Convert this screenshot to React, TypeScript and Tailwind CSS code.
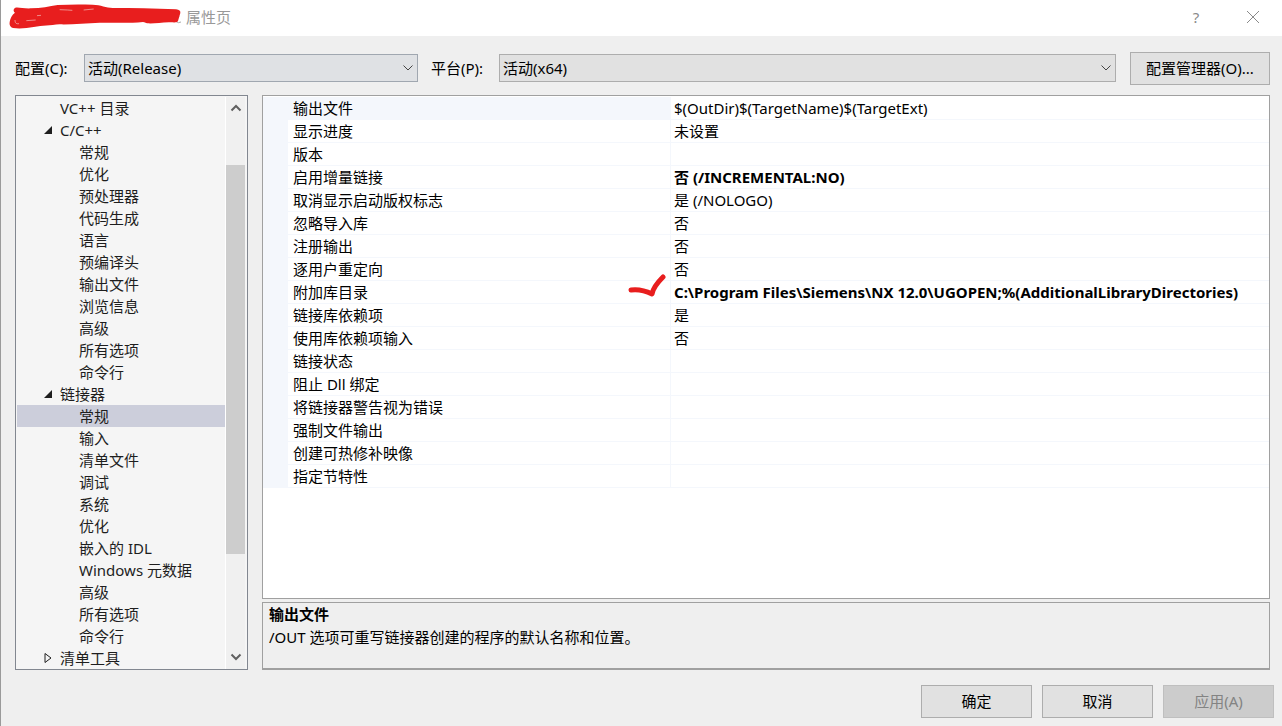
import { useState } from "react"

type TreeItem = {
  id: string
  label: string
  level: 1 | 2
  state?: "open" | "closed"
}

type Property = {
  name: string
  value: string
  bold?: boolean
  marked?: boolean
}

const tree: TreeItem[] = [
  { id: "vc", label: "VC++ 目录", level: 1 },
  { id: "c", label: "C/C++", level: 1, state: "open" },
  { id: "c-general", label: "常规", level: 2 },
  { id: "c-optimize", label: "优化", level: 2 },
  { id: "c-preprocessor", label: "预处理器", level: 2 },
  { id: "c-codegen", label: "代码生成", level: 2 },
  { id: "c-language", label: "语言", level: 2 },
  { id: "c-pch", label: "预编译头", level: 2 },
  { id: "c-output", label: "输出文件", level: 2 },
  { id: "c-browse", label: "浏览信息", level: 2 },
  { id: "c-advanced", label: "高级", level: 2 },
  { id: "c-all", label: "所有选项", level: 2 },
  { id: "c-cmd", label: "命令行", level: 2 },
  { id: "link", label: "链接器", level: 1, state: "open" },
  { id: "link-general", label: "常规", level: 2 },
  { id: "link-input", label: "输入", level: 2 },
  { id: "link-manifest", label: "清单文件", level: 2 },
  { id: "link-debug", label: "调试", level: 2 },
  { id: "link-system", label: "系统", level: 2 },
  { id: "link-optimize", label: "优化", level: 2 },
  { id: "link-idl", label: "嵌入的 IDL", level: 2 },
  { id: "link-winmd", label: "Windows 元数据", level: 2 },
  { id: "link-advanced", label: "高级", level: 2 },
  { id: "link-all", label: "所有选项", level: 2 },
  { id: "link-cmd", label: "命令行", level: 2 },
  { id: "manifest", label: "清单工具", level: 1, state: "closed" },
]

const properties: Property[] = [
  { name: "输出文件", value: "$(OutDir)$(TargetName)$(TargetExt)" },
  { name: "显示进度", value: "未设置" },
  { name: "版本", value: "" },
  { name: "启用增量链接", value: "否 (/INCREMENTAL:NO)", bold: true },
  { name: "取消显示启动版权标志", value: "是 (/NOLOGO)" },
  { name: "忽略导入库", value: "否" },
  { name: "注册输出", value: "否" },
  { name: "逐用户重定向", value: "否" },
  {
    name: "附加库目录",
    value: "C:\\Program Files\\Siemens\\NX 12.0\\UGOPEN;%(AdditionalLibraryDirectories)",
    bold: true,
    marked: true,
  },
  { name: "链接库依赖项", value: "是" },
  { name: "使用库依赖项输入", value: "否" },
  { name: "链接状态", value: "" },
  { name: "阻止 Dll 绑定", value: "" },
  { name: "将链接器警告视为错误", value: "" },
  { name: "强制文件输出", value: "" },
  { name: "创建可热修补映像", value: "" },
  { name: "指定节特性", value: "" },
]

function Chevron({ className }: { className: string }) {
  return (
    <svg viewBox="0 0 12 8" className={className} fill="none" stroke="currentColor" aria-hidden="true">
      <path d="M1.5 1.5 6 6l4.5-4.5" />
    </svg>
  )
}

function TreeArrow({ state }: { state?: "open" | "closed" }) {
  return (
    <svg viewBox="0 0 10 12" className="h-3 w-2.5 shrink-0" aria-hidden="true">
      {state === "open" && <path d="M9 2v8H1z" fill="#1e1e1e" />}
      {state === "closed" && <path d="M2 1.5v9L8 6z" fill="none" stroke="#1e1e1e" />}
    </svg>
  )
}

function Scribble() {
  return (
    <svg viewBox="0 0 552 108" className="h-9 w-[184px] shrink-0" aria-hidden="true">
      <path d="M536 38c-6 3-6 8-2 11M526 65l6 3 8-2" fill="none" stroke="#a8a8a8" strokeWidth="3" />
      <path
        d="M43 23c10-2 25 3 47 2 30 0 55-6 80-10 35-2 70-2 105-1 25 1 40 9 60 10 60 0 125 1 190 4 10 1 14 5 13 11l-7 24c-5 7-16 3-27 4-25 1-45 4-65 3-6-1-8-4-13-4-40 4-85 2-130 2-40 2-85 6-120 5-30 3-50 4-78 8-20 3-40 6-62 3-8-2-12-9-10-18 2-12 7-22 16-28-5-4-6-11 1-15z"
        fill="#e81e1e"
      />
      <path d="M42 60c0 10 4 12 12 11M76 62l28-2M108 47l12-1M176 29l24 1 14 1M248 30l30-3" fill="none" stroke="#f3c3c0" strokeWidth="2" />
    </svg>
  )
}

function CheckMark() {
  return (
    <svg viewBox="0 0 38 26" className="absolute -top-2 right-1 h-[26px] w-[38px]" aria-hidden="true">
      <path
        d="M3 17c8-1 15 1 21 4 1-6 6-12 11-17"
        fill="none"
        stroke="#e81e1e"
        strokeWidth="5"
        strokeLinecap="round"
        strokeLinejoin="round"
      />
    </svg>
  )
}

export default function App() {
  const [page, setPage] = useState("link-general")
  const [configuration, setConfiguration] = useState("release")
  const [platform, setPlatform] = useState("x64")

  const selectClass = "block h-7 w-full appearance-none border pl-[3px] pr-7 leading-6 outline-none"
  const buttonClass = "h-[33px] border border-[#adadad] bg-[#e1e1e1] pb-0.5 text-center"

  return (
    <div className="flex min-h-screen flex-col border-l border-[#9a9a9a] bg-[#efefef] font-['Noto_Sans','Noto_Sans_CJK_SC',sans-serif] text-[15px] leading-5 text-black">
      <header className="flex h-9 items-center bg-white">
        <Scribble />
        <h1 className="flex-1 pb-0.5 pl-px text-[#999999]">属性页</h1>
        <button type="button" aria-label="帮助" className="w-14 pb-0.5 text-center text-[#8a8a8a]">?</button>
        <button type="button" aria-label="关闭" className="flex w-[58px] justify-center pb-0.5 text-[#8a8a8a]">
          <svg viewBox="0 0 14 14" className="size-3.5" stroke="currentColor" aria-hidden="true">
            <path d="m1 1 12 12M13 1 1 13" />
          </svg>
        </button>
      </header>

      {/* Configuration and platform */}
      <div className="flex items-center pt-4 pr-3 pl-3.5">
        <label htmlFor="configuration" className="w-[69px] shrink-0 pb-0.5">配置(C):</label>
        <div className="relative w-[334px] shrink-0 pb-px">
          <select
            id="configuration"
            value={configuration}
            onChange={(e) => setConfiguration(e.target.value)}
            className={`${selectClass} border-[#a0a7b0] bg-[#dfe1e4]`}
          >
            <option value="release">活动(Release)</option>
            <option value="debug">Debug</option>
          </select>
          <Chevron className="pointer-events-none absolute top-2.5 right-1 h-2 w-3 text-[#444444]" />
        </div>
        <label htmlFor="platform" className="w-[81px] shrink-0 pb-0.5 pl-[13px]">平台(P):</label>
        <div className="relative flex-1 pb-px">
          <select
            id="platform"
            value={platform}
            onChange={(e) => setPlatform(e.target.value)}
            className={`${selectClass} border-[#adadad] bg-[#e1e1e1]`}
          >
            <option value="x64">活动(x64)</option>
            <option value="win32">Win32</option>
          </select>
          <Chevron className="pointer-events-none absolute top-2.5 right-1 h-2 w-3 text-[#444444]" />
        </div>
        <button type="button" className={`${buttonClass} ml-3.5 w-[140px]`}>配置管理器(O)...</button>
      </div>

      <main className="flex flex-1 gap-3.5 pt-2.5 pr-3 pl-3.5">
        {/* Page tree */}
        <nav className="flex w-[233px] shrink-0 border border-[#828790] bg-[#f5f5f5] pt-px pr-0.5 pl-px">
          <ul className="min-w-0 flex-1 text-[#1e1e1e]">
            {tree.map((item) => (
              <li key={item.id}>
                <button
                  type="button"
                  onClick={() => setPage(item.id)}
                  className={`flex h-[22px] w-full items-center gap-[7px] text-left leading-[22px] whitespace-nowrap ${
                    item.level === 1 ? "pl-[26px]" : "pl-[45px]"
                  } ${page === item.id ? "bg-[#cccedb]" : ""}`}
                >
                  <TreeArrow state={item.state} />
                  {item.label}
                </button>
              </li>
            ))}
          </ul>
          <div className="flex w-5 flex-col items-center border-l border-white bg-[#f0f0f0] text-[#606060]">
            <Chevron className="my-[7px] h-2 w-3 rotate-180 stroke-2" />
            <div className="mt-[46px] h-[389px] w-full bg-[#cdcdcd]" />
            <Chevron className="mt-auto mb-2 h-2 w-3 stroke-2" />
          </div>
        </nav>

        <div className="flex min-w-0 flex-1 flex-col gap-[3px]">
          {/* Property grid */}
          <div className="flex-1 border border-[#a0a0a0] bg-white pt-px">
            <table className="w-full table-fixed border-separate border-spacing-0">
              <tbody>
                {properties.map((property, i) => (
                  <tr key={property.name} className="h-[23px]">
                    <td className="w-[25px] bg-[#f4f7fc] p-0" />
                    <th
                      scope="row"
                      className={`relative w-[383px] border-r border-b border-[#f4f7fc] p-0 pl-[5px] text-left leading-[22px] font-normal ${
                        i === 0 ? "bg-[#f4f7fc]" : ""
                      }`}
                    >
                      {property.name}
                      {property.marked && <CheckMark />}
                    </th>
                    <td
                      className={`border-b border-[#f4f7fc] p-0 pl-[3px] leading-[22px] whitespace-nowrap ${
                        property.bold ? "font-bold" : ""
                      }`}
                    >
                      {property.value}
                    </td>
                  </tr>
                ))}
              </tbody>
            </table>
          </div>

          {/* Description */}
          <section className="h-[68px] border border-b-2 border-[#a0a0a0] px-1.5 leading-[23px]">
            <h2 className="font-bold">输出文件</h2>
            <p>/OUT 选项可重写链接器创建的程序的默认名称和位置。</p>
          </section>
        </div>
      </main>

      <footer className="flex justify-end gap-2.5 pt-[15px] pr-2 pb-2">
        <button type="button" className={`${buttonClass} w-[111px]`}>确定</button>
        <button type="button" className={`${buttonClass} w-[111px]`}>取消</button>
        <button type="button" disabled className="h-[33px] w-[111px] border border-[#bfbfbf] bg-[#cccccc] pb-0.5 text-center text-[#838383]">
          应用(A)
        </button>
      </footer>
    </div>
  )
}
